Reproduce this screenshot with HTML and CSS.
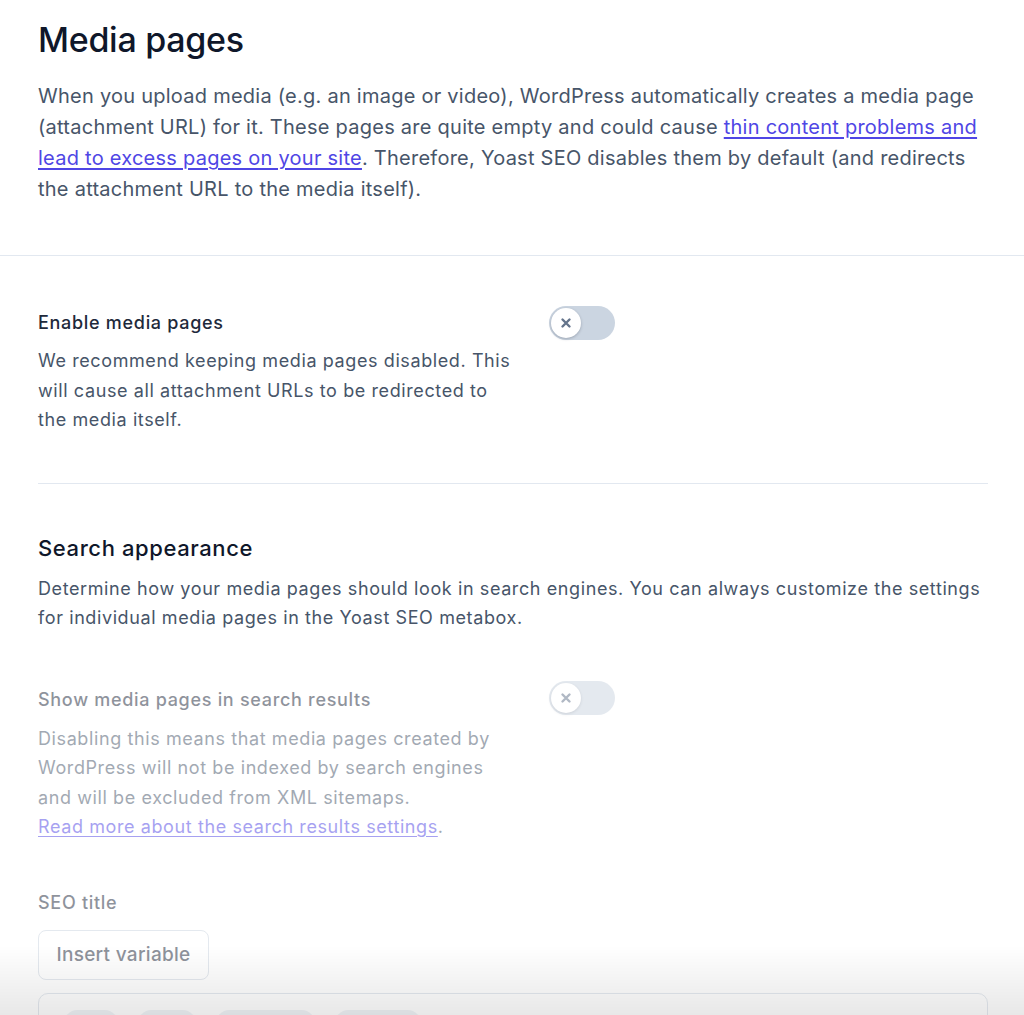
FILE: index.html
```html
<!DOCTYPE html>
<html lang="en">
<head>
	<meta charset="UTF-8">
	<meta name="viewport" content="width=device-width, initial-scale=1.0">
	<title>Media pages</title>
	<link rel="stylesheet" href="styles.css">
</head>
<body>
	<header class="page-header">
		<h1 class="page-title">Media pages</h1>
		<p class="intro">When you upload media (e.g. an image or video), WordPress automatically creates a media page (attachment URL) for it. These pages are quite empty and could cause <a href="#">thin content problems and lead to excess pages on your site</a>. Therefore, Yoast SEO disables them by default (and redirects the attachment URL to the media itself).</p>
	</header>

	<main class="content">
		<div class="field-row">
			<div class="field-text">
				<h3 class="field-label">Enable media pages</h3>
				<p class="field-desc">We recommend keeping media pages disabled. This will cause all attachment URLs to be redirected to the media itself.</p>
			</div>
			<button class="toggle" type="button" aria-label="Enable media pages">
				<span class="thumb">
					<svg viewBox="0 0 12 12" width="12" height="12"><path d="M2.5 2.5l7 7M9.5 2.5l-7 7" stroke="currentColor" stroke-width="2.4" stroke-linecap="round"/></svg>
				</span>
			</button>
		</div>

		<hr class="divider">

		<section class="search-appearance">
			<h2 class="section-title">Search appearance</h2>
			<p class="section-desc">Determine how your media pages should look in search engines. You can always customize the settings for individual media pages in the Yoast SEO metabox.</p>

			<div class="disabled">
				<div class="field-row">
					<div class="field-text">
						<h3 class="field-label">Show media pages in search results</h3>
						<p class="field-desc">Disabling this means that media pages created by WordPress will not be indexed by search engines and will be excluded from XML sitemaps.<br><a href="#">Read more about the search results settings</a>.</p>
					</div>
					<button class="toggle" type="button" aria-label="Show media pages in search results">
						<span class="thumb">
							<svg viewBox="0 0 12 12" width="12" height="12"><path d="M2.5 2.5l7 7M9.5 2.5l-7 7" stroke="currentColor" stroke-width="2.4" stroke-linecap="round"/></svg>
						</span>
					</button>
				</div>

				<label class="seo-label">SEO title</label>
				<button class="insert-btn" type="button">Insert variable</button>
				<div class="editor">
					<span class="chip chip-1"></span>
					<span class="chip chip-2"></span>
					<span class="chip chip-3"></span>
					<span class="chip chip-4"></span>
				</div>
			</div>
		</section>
	</main>

	<div class="fade"></div>
</body>
</html>
```

FILE: styles.css
```css
body {
	margin: 0;
	background-color: #fff;
	font-family: Inter, "Noto Sans", sans-serif;
	color: #475569;
	overflow: hidden;
}

a {
	color: #4f46e5;
	text-decoration: underline;
	text-underline-offset: 3px;
}

.page-header {
	padding: 19px 36px 50px 38px;
	border-bottom: 1px solid #e2e8f0;
}

.page-title {
	margin: 0;
	font-size: 34px;
	line-height: 42px;
	font-weight: 500;
	color: #0f172a;
	letter-spacing: -0.3px;
}

.intro {
	margin: 20px 0 0;
	font-size: 20px;
	line-height: 31px;
	letter-spacing: 0.25px;
}

.content {
	padding: 52px 36px 0 38px;
}

.field-row {
	display: flex;
	align-items: flex-start;
	gap: 37px;
}

.field-text {
	width: 474px;
}

.field-label {
	margin: 1px 0 0;
	font-size: 18px;
	line-height: 28px;
	font-weight: 500;
	color: #1e293b;
	letter-spacing: 0.7px;
}

.field-desc {
	margin: 9px 0 0;
	font-size: 18px;
	line-height: 29.5px;
	letter-spacing: 0.6px;
}

.toggle {
	position: relative;
	flex-shrink: 0;
	width: 66px;
	height: 34px;
	margin-top: -2px;
	padding: 0;
	border: none;
	border-radius: 17px;
	background-color: #cbd5e1;
	cursor: pointer;
}

.thumb {
	position: absolute;
	left: 2px;
	top: 2px;
	width: 30px;
	height: 30px;
	border-radius: 50%;
	background-color: #fff;
	box-shadow: 0 1px 3px rgba(15, 23, 42, .25);
	display: flex;
	align-items: center;
	justify-content: center;
	color: #64748b;
}

.divider {
	margin: 48px 0 0;
	border: none;
	border-top: 1px solid #e2e8f0;
}

.section-title {
	margin: 49px 0 0;
	font-size: 22px;
	line-height: 30px;
	font-weight: 500;
	color: #0f172a;
	letter-spacing: 0.6px;
}

.section-desc {
	margin: 11px 0 0;
	font-size: 18px;
	line-height: 29.5px;
	letter-spacing: 0.6px;
}

.disabled {
	opacity: .5;
	margin-top: 52px;
}

.disabled .toggle {
	margin-top: -4px;
}

.disabled .field-desc {
	margin-top: 10px;
}

.seo-label {
	display: block;
	margin-top: 47px;
	font-size: 18px;
	line-height: 28px;
	font-weight: 500;
	color: #1e293b;
	letter-spacing: 0.7px;
}

.insert-btn {
	display: block;
	margin-top: 13px;
	width: 171px;
	height: 50px;
	border: 1px solid #cbd5e1;
	border-radius: 8px;
	background-color: #fff;
	font-family: inherit;
	font-size: 19px;
	font-weight: 500;
	color: #1e293b;
	letter-spacing: 0.3px;
}

.editor {
	margin-top: 13px;
	height: 60px;
	border: 1px solid #cbd5e1;
	border-radius: 10px;
	padding: 16px 24px;
	display: flex;
	gap: 18px;
	box-sizing: border-box;
}

.chip {
	height: 30px;
	border-radius: 15px;
	background-color: #e2e8f0;
}

.chip-1 { width: 56px; }
.chip-2 { width: 60px; }
.chip-3 { width: 101px; }
.chip-4 { width: 88px; }

.fade {
	position: fixed;
	left: 0;
	right: 0;
	bottom: 0;
	height: 70px;
	background: linear-gradient(to bottom, rgba(0, 0, 0, 0), rgba(0, 0, 0, .09));
	pointer-events: none;
}
```
